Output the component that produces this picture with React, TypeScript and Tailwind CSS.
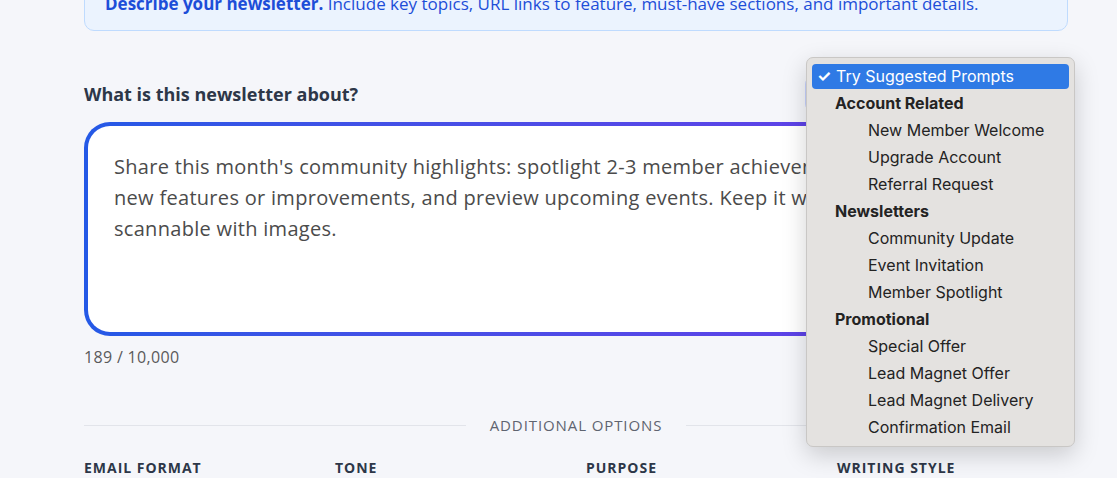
import { ChevronDown } from 'lucide-react';

const groups = [
  { title: 'Account Related', items: ['New Member Welcome', 'Upgrade Account', 'Referral Request'] },
  { title: 'Newsletters', items: ['Community Update', 'Event Invitation', 'Member Spotlight'] },
  { title: 'Promotional', items: ['Special Offer', 'Lead Magnet Offer', 'Lead Magnet Delivery', 'Confirmation Email'] },
];

const options = ['Email Format', 'Tone', 'Purpose', 'Writing Style'];

function PromptMenu() {
  return (
    <div
      className="absolute left-[806px] top-[57px] w-[269px] rounded-[7px] border border-[#c9c7c5] bg-[#e4e2e0] p-[5px] text-[16px] leading-[27px] text-[#232323] shadow-[0_8px_24px_rgba(0,0,0,0.18)]"
      style={{ fontFamily: 'Inter, "Liberation Sans", sans-serif' }}
    >
      <div className="my-[1px] flex h-[25px] items-center rounded-[4px] bg-[#2f7ae5] pl-[5px] leading-[25px] text-white">
        <span className="w-[19px] font-bold">✓</span>
        <span>Try Suggested Prompts</span>
      </div>
      {groups.map((g) => (
        <div key={g.title}>
          <div className="pl-[23px] font-bold">{g.title}</div>
          {g.items.map((item) => (
            <div key={item} className="pl-[56px]">
              {item}
            </div>
          ))}
        </div>
      ))}
    </div>
  );
}

export default function App() {
  return (
    <div
      className="relative h-[478px] overflow-hidden bg-[#f5f6fa]"
      style={{ fontFamily: '"Open Sans", "Noto Sans", sans-serif' }}
    >
      <div className="ml-[84px] mt-[-23px] w-[984px]">
        <div className="rounded-[10px] border border-[#bfdbfe] bg-[#ebf3fe] px-5 py-[14px] text-[17px] leading-6 text-[#1d4ed8]">
          <span className="font-bold">Describe your newsletter.</span> Include key topics, URL links to feature, must-have sections, and important details.
        </div>

        <div className="mt-[45px] flex h-[36px] items-center justify-between">
          <label className="text-[18px] font-bold leading-6 text-[#2d3748]">What is this newsletter about?</label>
          <div className="flex h-[36px] w-[263px] items-center justify-between rounded-lg border border-[#c7d2fe] bg-[#eef2ff] px-3 text-[15px] text-[#3730a3]">
            <span>Try Suggested Prompts</span>
            <ChevronDown size={16} />
          </div>
        </div>

        <div className="mt-[10px] rounded-[26px] bg-gradient-to-r from-[#2459e6] to-[#6a38e8] p-[4px]">
          <div className="h-[206px] rounded-[22px] bg-white px-[26px] pt-[25px] text-[20px] leading-[31px] tracking-[0.015em] text-[#4b4b4b]">
            Share this month's community highlights: spotlight 2-3 member achievements, announce new{'\u00a0'}features or improvements, and preview upcoming events. Keep it warm, personal and scannable with images.
          </div>
        </div>

        <div className="mt-[10px] text-[16px] leading-[22px] tracking-[0.02em] text-[#5a5a5a]">189 / 10,000</div>

        <div className="mt-[47px] flex h-[21px] items-center gap-6">
          <div className="h-px flex-1 bg-[#e2e4ea]" />
          <span className="text-[15px] leading-[21px] tracking-[0.06em] text-[#5f6470]">ADDITIONAL OPTIONS</span>
          <div className="h-px flex-1 bg-[#e2e4ea]" />
        </div>

        <div className="mt-[21px] grid grid-cols-4 gap-5">
          {options.map((o) => (
            <div key={o} className="text-[14px] font-bold uppercase leading-[21px] tracking-[0.07em] text-[#2d3748]">
              {o}
            </div>
          ))}
        </div>
      </div>

      <PromptMenu />
    </div>
  );
}
